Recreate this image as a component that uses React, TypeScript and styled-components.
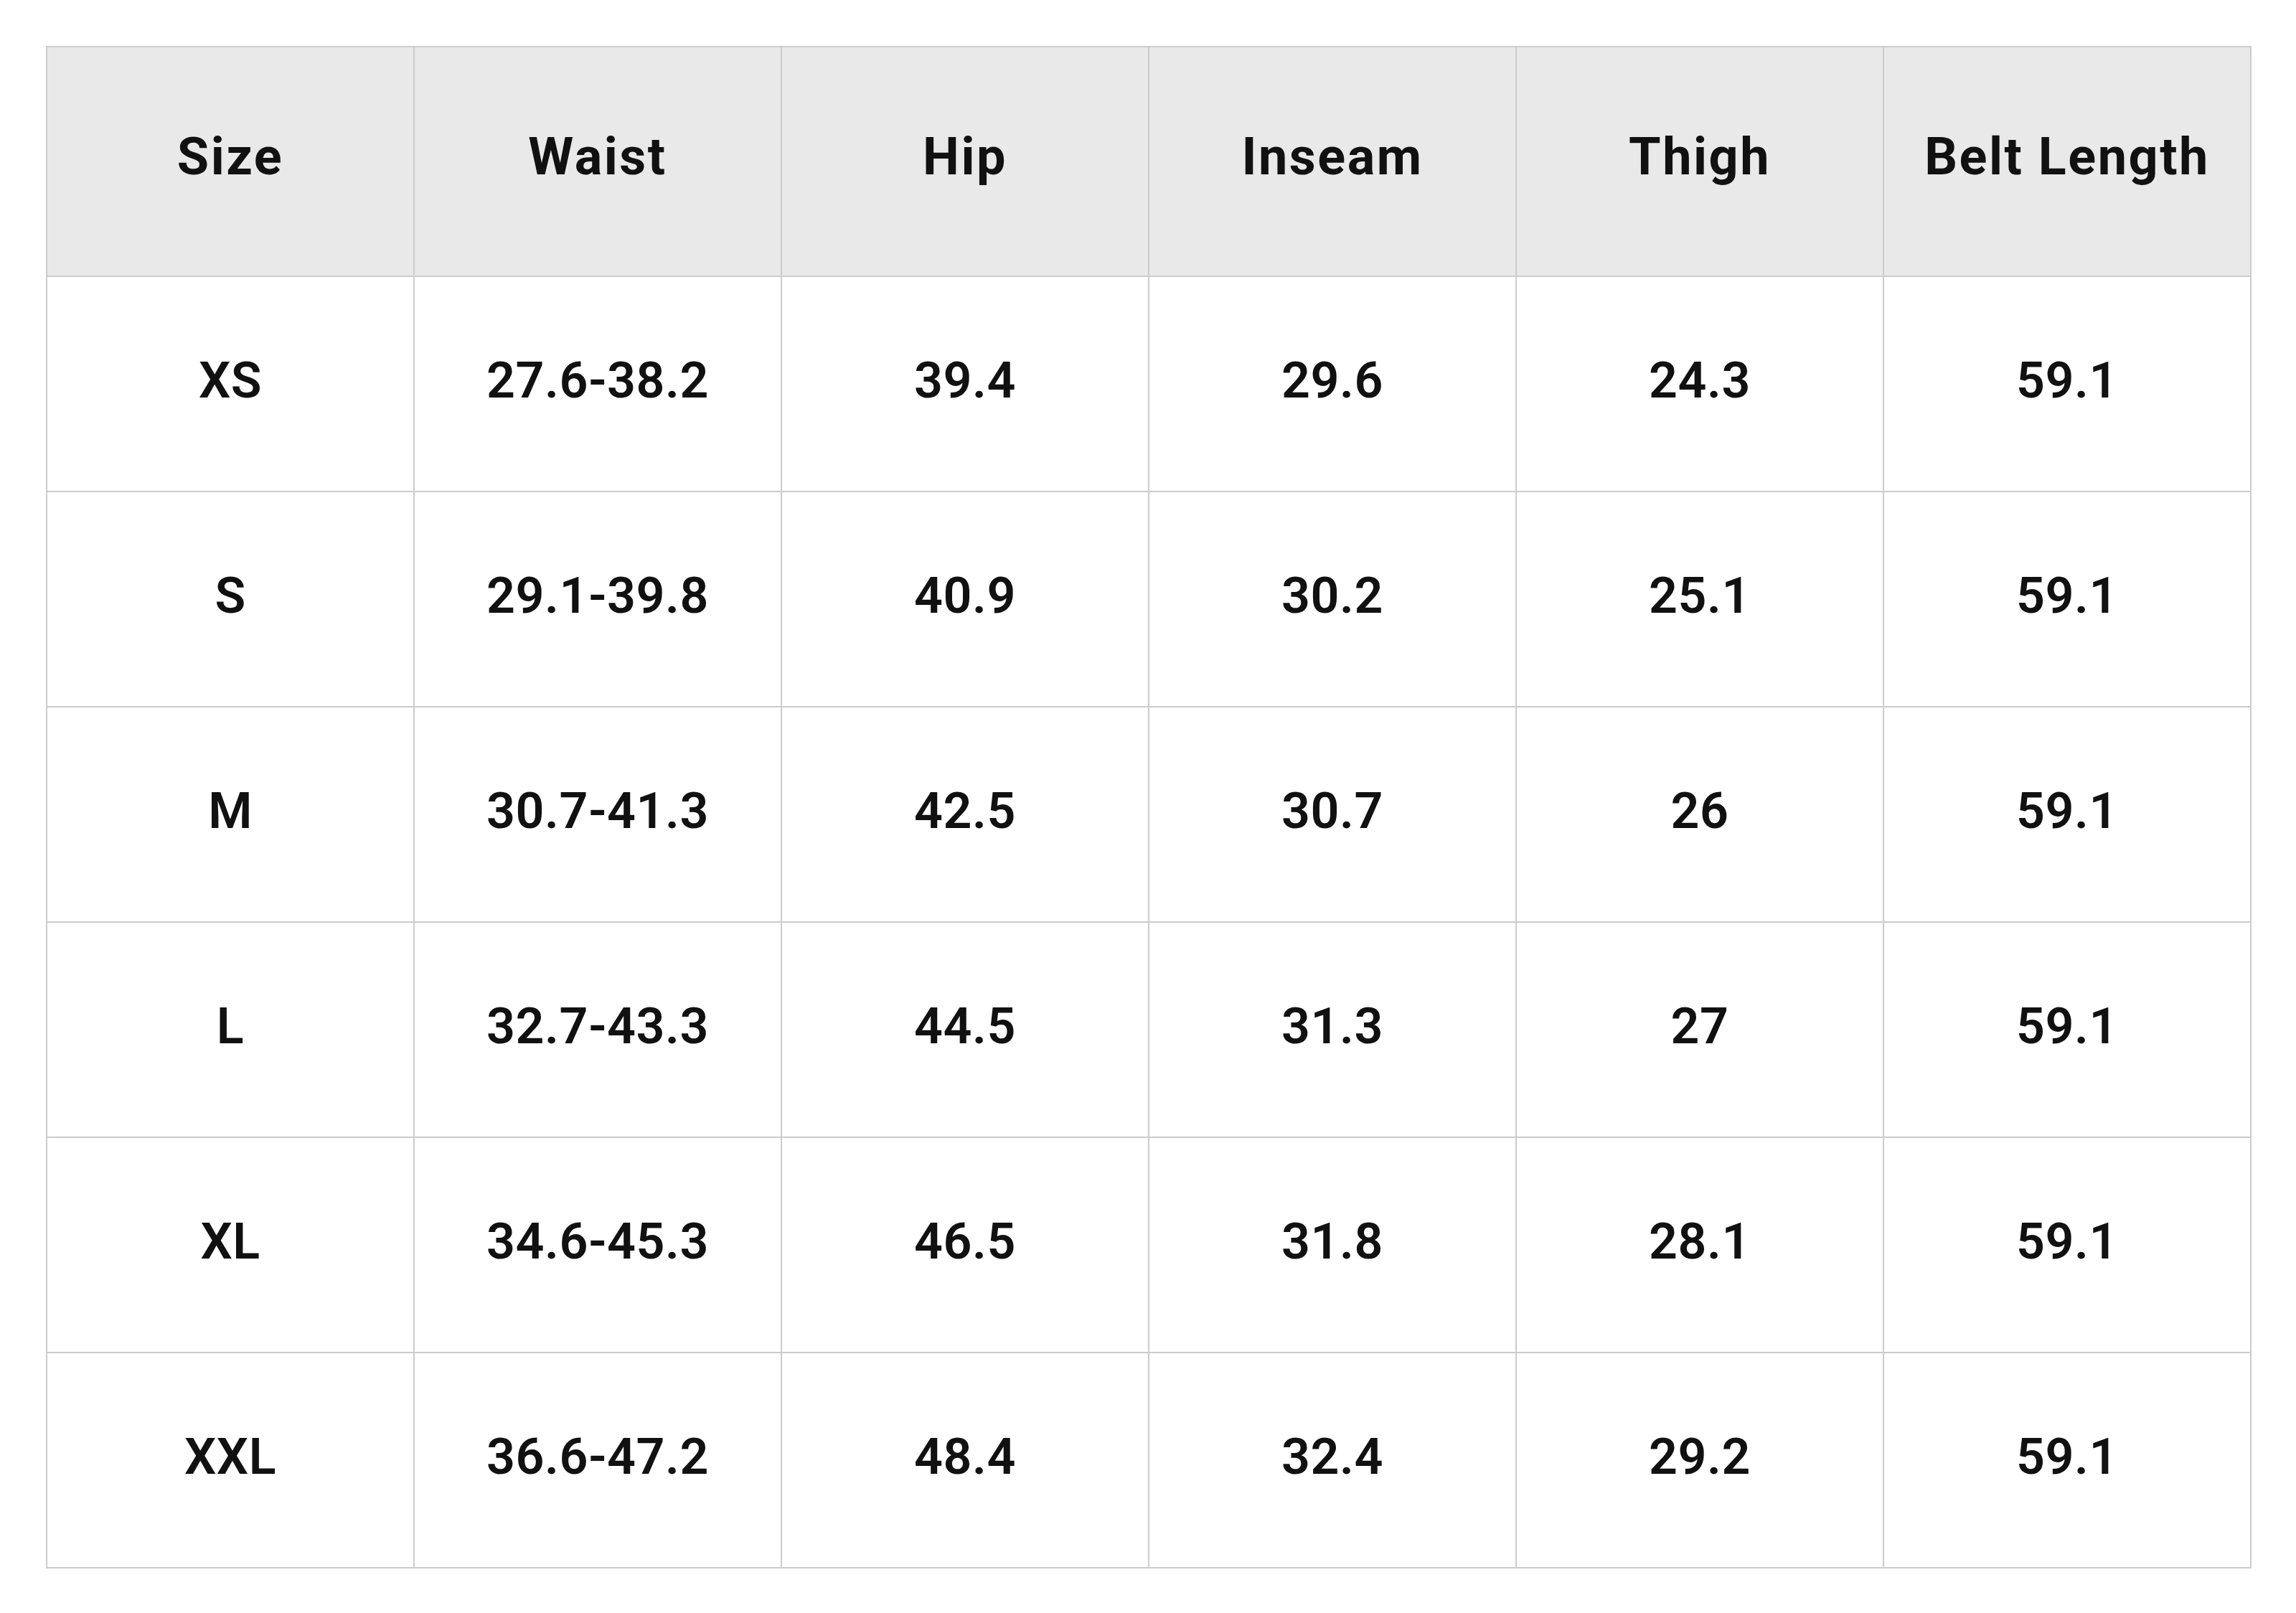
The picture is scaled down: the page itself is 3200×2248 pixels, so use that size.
import React from "react";
import styled, { createGlobalStyle } from "styled-components";

const GlobalStyle = createGlobalStyle`
  html, body { margin: 0; padding: 0; background: #ffffff; }
  body { font-family: Roboto, "Liberation Sans", sans-serif; color: #111111; }
`;

const Page = styled.div`
  padding: 64px;
  background: #ffffff;
`;

const Table = styled.table`
  width: 3074px;
  border-collapse: collapse;
  table-layout: fixed;
`;

const HeadCell = styled.th`
  box-sizing: border-box;
  height: 320px;
  background: #e9e9e9;
  border: 2px solid #cccccc;
  font-family: Roboto, "Liberation Sans", sans-serif;
  font-weight: 700;
  font-size: 72px;
  line-height: 1;
  letter-spacing: 2.5px;
  color: #111111;
  text-align: center;
  vertical-align: middle;
  padding: 0 0 12px;
`;

const Cell = styled.td`
  box-sizing: border-box;
  height: 300px;
  background: #ffffff;
  border: 2px solid #cccccc;
  font-family: Roboto, "Liberation Sans", sans-serif;
  font-weight: 600;
  font-size: 70px;
  line-height: 1;
  letter-spacing: 0.5px;
  color: #111111;
  text-align: center;
  vertical-align: middle;
  padding: 0 0 10px;
`;

const headers = ["Size", "Waist", "Hip", "Inseam", "Thigh", "Belt Length"];

const rows: string[][] = [
  ["XS", "27.6-38.2", "39.4", "29.6", "24.3", "59.1"],
  ["S", "29.1-39.8", "40.9", "30.2", "25.1", "59.1"],
  ["M", "30.7-41.3", "42.5", "30.7", "26", "59.1"],
  ["L", "32.7-43.3", "44.5", "31.3", "27", "59.1"],
  ["XL", "34.6-45.3", "46.5", "31.8", "28.1", "59.1"],
  ["XXL", "36.6-47.2", "48.4", "32.4", "29.2", "59.1"],
];

export default function App() {
  return (
    <>
      <GlobalStyle />
      <Page>
        <Table>
          <thead>
            <tr>
              {headers.map((h) => (
                <HeadCell key={h}>{h}</HeadCell>
              ))}
            </tr>
          </thead>
          <tbody>
            {rows.map((r) => (
              <tr key={r[0]}>
                {r.map((v, i) => (
                  <Cell key={i}>{v}</Cell>
                ))}
              </tr>
            ))}
          </tbody>
        </Table>
      </Page>
    </>
  );
}
